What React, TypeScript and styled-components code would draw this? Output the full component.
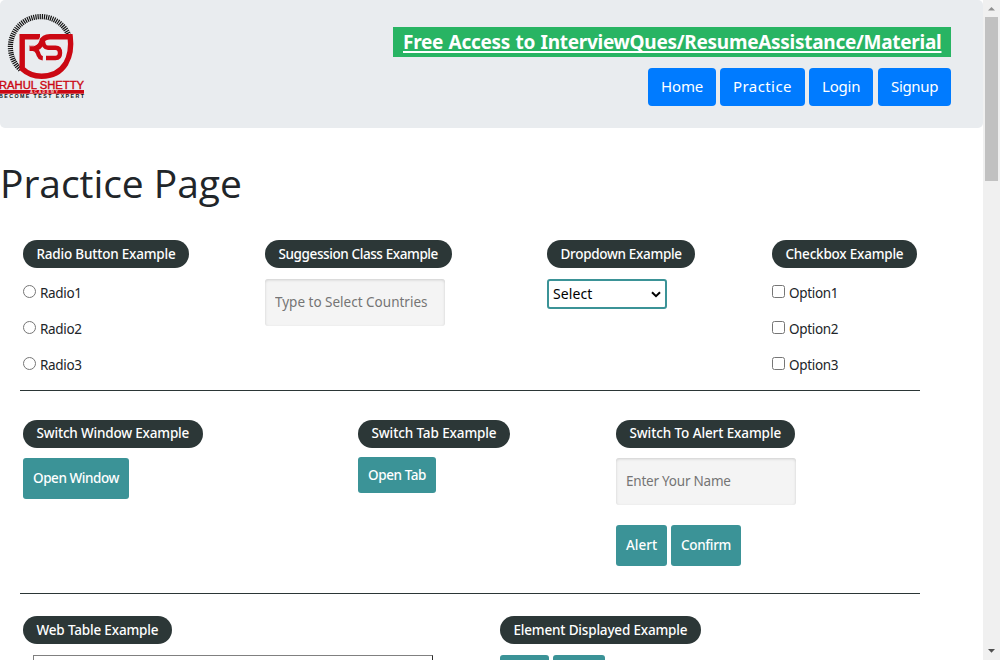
import React from 'react';
import styled, { createGlobalStyle } from 'styled-components';

const GlobalStyle = createGlobalStyle`
  * { box-sizing: border-box; }
  html, body { margin: 0; padding: 0; overflow: hidden; }
  body {
    background: #fff;
    color: #212529;
    font-family: "Noto Sans", "Open Sans", sans-serif;
  }
`;

const Window = styled.div`
  display: flex;
  width: 1000px;
  height: 660px;
  overflow: hidden;
`;

const Page = styled.main`
  flex: 1;
  min-width: 0;
  overflow: hidden;
`;

const Header = styled.header`
  display: flex;
  justify-content: space-between;
  height: 128px;
  padding: 0 32px 0 0;
  border-radius: 5px;
  background: #e9ecef;
`;

const Logo = styled.svg`
  display: block;
  width: 100px;
  height: 110px;
`;

const HeaderSide = styled.div`
  display: flex;
  flex-direction: column;
  align-items: flex-end;
  gap: 11px;
  padding-top: 27px;
`;

const Banner = styled.a`
  width: 558px;
  height: 30px;
  padding-left: 10px;
  background: #28b463;
  color: #fff;
  font-size: 19px;
  font-weight: 700;
  line-height: 30px;
  letter-spacing: -0.28px;
  word-spacing: 0.8px;
  white-space: nowrap;
  text-decoration: underline;
  text-decoration-thickness: 2px;
  text-underline-offset: 2px;
  text-decoration-skip-ink: none;
`;

const Nav = styled.nav`
  display: flex;
  gap: 4px;
`;

const NavButton = styled.button<{ $width: number; $spacing: number }>`
  width: ${(p) => p.$width}px;
  height: 38px;
  padding: 0 0 2px 13px;
  border: 0;
  border-radius: 4px;
  background: #007bff;
  color: #fff;
  font: 400 15px/36px "Noto Sans", sans-serif;
  letter-spacing: ${(p) => p.$spacing}px;
  text-align: left;
  white-space: nowrap;

  &:last-child { margin-left: 1px; }
`;

const Title = styled.h1`
  height: 48px;
  margin: 32px 0;
  font-family: "Open Sans", sans-serif;
  font-size: 39px;
  font-weight: 400;
  line-height: 46px;
  letter-spacing: -0.05px;
`;

const Section = styled.section<{ $columns: string; $height: number; $top?: number }>`
  display: grid;
  grid-template-columns: ${(p) => p.$columns};
  align-items: start;
  width: 900px;
  height: ${(p) => p.$height}px;
  margin-left: 20px;
  padding: ${(p) => p.$top ?? 0}px 0 0 3px;
  border-bottom: 1px solid #2b3636;
`;

const Group = styled.div<{ $gap?: number }>`
  display: flex;
  flex-direction: column;
  align-items: flex-start;
  gap: ${(p) => p.$gap ?? 10}px;
`;

const Pill = styled.div<{ $width: number; $spacing: number; $lift?: number }>`
  width: ${(p) => p.$width}px;
  height: 28px;
  padding: 0 0 ${(p) => p.$lift ?? 0}px 13.5px;
  border-radius: 14px;
  background: #2c3737;
  color: #fff;
  font: 500 13.5px/28px "Noto Sans", sans-serif;
  line-height: ${(p) => 28 - (p.$lift ?? 0)}px;
  letter-spacing: ${(p) => p.$spacing}px;
  white-space: nowrap;
`;

const Choices = styled.div`
  display: flex;
  flex-direction: column;
  gap: 16px;
  padding-top: 5px;
`;

const Choice = styled.label`
  display: flex;
  align-items: flex-start;
  gap: 4px;
  height: 20px;
  font-size: 13.5px;
  line-height: 20px;
  letter-spacing: -0.32px;
`;

const Mark = styled.input`
  width: 13px;
  height: 13px;
  margin: 2px 0 0;
`;

const TextInput = styled.input<{ $spacing: number }>`
  width: 180px;
  height: 47px;
  padding: 0 10px 2px;
  border: 0;
  border-radius: 3px;
  background: #f4f4f4;
  box-shadow: inset 0 1px 3px rgba(0, 0, 0, 0.16);
  font: 400 13.5px "Noto Sans", sans-serif;
  letter-spacing: ${(p) => p.$spacing}px;
  &::placeholder { color: #757575; opacity: 1; }
`;

const Dropdown = styled.div`
  display: flex;
  align-items: center;
  justify-content: space-between;
  width: 120px;
  height: 30px;
  padding: 0 4px 0 4px;
  border: 2px solid #3b9397;
  border-radius: 3px;
  color: #000;
  font-size: 14px;
  line-height: 26px;
  letter-spacing: 0.1px;
`;

const Buttons = styled.div`
  display: flex;
  gap: 4px;
`;

const Action = styled.button<{ $width: number; $height?: number; $spacing?: number }>`
  width: ${(p) => p.$width}px;
  height: ${(p) => p.$height ?? 41}px;
  padding: 0 0 1px 10px;
  border: 0;
  border-radius: 3px;
  background: #3b9397;
  color: #fff;
  font: 500 13.5px/20px "Noto Sans", sans-serif;
  letter-spacing: ${(p) => p.$spacing ?? 0}px;
  text-align: left;
  white-space: nowrap;
`;

const TableFrame = styled.div`
  width: 400px;
  height: 60px;
  margin: 1px 0 0 10px;
  border: 1px solid;
  border-color: #808080 #2c2c2c #2c2c2c #808080;
`;

const Scrollbar = styled.aside`
  display: flex;
  flex-direction: column;
  align-items: center;
  justify-content: space-between;
  width: 17px;
  background: #f0f0f0;
`;

const ScrollArrow = styled.svg`
  display: block;
  width: 17px;
  height: 17px;
`;

const Track = styled.div`
  flex: 1;
`;

const Thumb = styled.div`
  width: 13px;
  height: 164px;
  background: #c1c1c1;
`;

const ticks = Array.from({ length: 52 }, (_, i) => 133 + i * 4).map((deg) => {
  const a = (deg * Math.PI) / 180;
  return `M${40.8 + 27.8 * Math.cos(a)} ${47 + 27.8 * Math.sin(a)}L${40.8 + 33 * Math.cos(a)} ${47 + 33 * Math.sin(a)}`;
}).join('');

function BrandLogo() {
  return (
    <Logo viewBox="0 0 100 110">
      <path d={ticks} stroke="#111" strokeWidth="1.2" />
      <g fill="none" stroke="#cb0813">
        <path d="M40 36.8H22.2V68.8Q30 76.2 41.5 76.2Q58 76.2 65.8 63.5Q72.2 52 70.2 36.8H50Q43.5 36.8 42 41.5Q40 48 34 48.3H29.5" strokeWidth="5.4" />
        <path d="M42.5 38Q43 47.8 48 47.8H55.5Q60 47.8 60 53Q60 58 55.5 58H46" strokeWidth="4.4" />
        <path d="M33 48.7Q36.5 49 38 53Q39.2 58 42.8 58.2" strokeWidth="4.4" />
      </g>
      <path d="M30 45.8H34Q37.5 44.8 38.5 40.5Q40 36.3 43.5 34.5" fill="none" stroke="#e9ecef" strokeWidth=".8" />
      <text x="-1" y="89.2" fill="#cb0813" stroke="#cb0813" strokeWidth=".4" fontFamily="Liberation Sans" fontSize="11.7" textLength="85" lengthAdjust="spacingAndGlyphs">RAHUL SHETTY</text>
      <rect y="90" width="84" height="3.7" fill="#cb0813" />
      <text x="30" y="93.3" fill="#f4dcdd" fontFamily="Liberation Sans" fontWeight="700" fontSize="3.8" textLength="28">ACADEMY</text>
      <text x="-1" y="98.2" fill="#111" fontFamily="Liberation Sans" fontWeight="700" fontSize="5.3" textLength="85">BECOME TEST EXPERT</text>
    </Logo>
  );
}

export default function App() {
  return (
    <Window>
      <GlobalStyle />
      <Page>
        <Header>
          <BrandLogo />
          <HeaderSide>
            <Banner>Free Access to InterviewQues/ResumeAssistance/Material</Banner>
            <Nav>
              <NavButton $width={68} $spacing={-0.15}>Home</NavButton>
              <NavButton $width={85} $spacing={0.42}>Practice</NavButton>
              <NavButton $width={64} $spacing={-0.22}>Login</NavButton>
              <NavButton $width={73} $spacing={-0.33}>Signup</NavButton>
            </Nav>
          </HeaderSide>
        </Header>

        <Title>Practice Page</Title>

        <Section $columns="242px 282px 225px 148px" $height={151}>
          <Group>
            <Pill $width={166} $spacing={-0.2}>Radio Button Example</Pill>
            <Choices>
              {['Radio1', 'Radio2', 'Radio3'].map((name) => (
                <Choice key={name}><Mark type="radio" name="radio" />{name}</Choice>
              ))}
            </Choices>
          </Group>
          <Group $gap={11}>
            <Pill $width={187} $spacing={-0.4}>Suggession Class Example</Pill>
            <TextInput placeholder="Type to Select Countries" $spacing={0} />
          </Group>
          <Group $gap={11}>
            <Pill $width={148} $spacing={-0.31}>Dropdown Example</Pill>
            <Dropdown>
              Select
              <svg width="10" height="7" viewBox="0 0 10 7">
                <path d="M1 1.2L5 5.2L9 1.2" fill="none" stroke="#000" strokeWidth="2" />
              </svg>
            </Dropdown>
          </Group>
          <Group>
            <Pill $width={145} $spacing={-0.21}>Checkbox Example</Pill>
            <Choices>
              {['Option1', 'Option2', 'Option3'].map((name) => (
                <Choice key={name}><Mark type="checkbox" />{name}</Choice>
              ))}
            </Choices>
          </Group>
        </Section>

        <Section $columns="335px 258px 304px" $height={203} $top={29}>
          <Group>
            <Pill $width={180} $spacing={-0.18} $lift={1}>Switch Window Example</Pill>
            <Action $width={106} $spacing={-0.43}>Open Window</Action>
          </Group>
          <Group $gap={9}>
            <Pill $width={152} $spacing={-0.11} $lift={1}>Switch Tab Example</Pill>
            <Action $width={78} $height={36} $spacing={-0.4}>Open Tab</Action>
          </Group>
          <Group>
            <Pill $width={179} $spacing={-0.1} $lift={1}>Switch To Alert Example</Pill>
            <Group $gap={20}>
              <TextInput placeholder="Enter Your Name" $spacing={-0.22} />
              <Buttons>
                <Action $width={51}>Alert</Action>
                <Action $width={70} $spacing={-0.32}>Confirm</Action>
              </Buttons>
            </Group>
          </Group>
        </Section>

        <Section $columns="477px 420px" $height={200} $top={22}>
          <Group>
            <Pill $width={149} $spacing={-0.17}>Web Table Example</Pill>
            <TableFrame />
          </Group>
          <Group $gap={11}>
            <Pill $width={201} $spacing={-0.18}>Element Displayed Example</Pill>
            <Buttons>
              <Action $width={49} />
              <Action $width={52} />
            </Buttons>
          </Group>
        </Section>
      </Page>

      <Scrollbar>
        <ScrollArrow viewBox="0 0 17 17"><path d="M5 10.5L8.5 7L12 10.5Z" fill="#909090" /></ScrollArrow>
        <Track><Thumb /></Track>
        <ScrollArrow viewBox="0 0 17 17"><path d="M5 6L8.5 9.8L12 6Z" fill="#505050" /></ScrollArrow>
      </Scrollbar>
    </Window>
  );
}
